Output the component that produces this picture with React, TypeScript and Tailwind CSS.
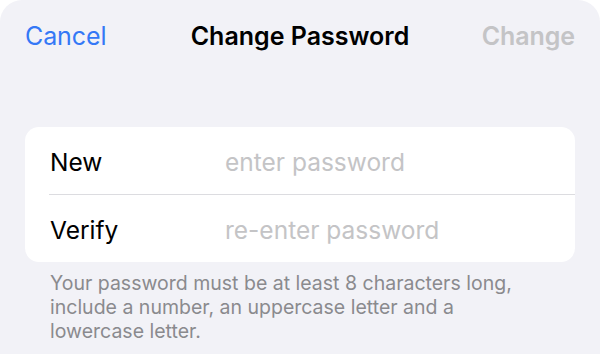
export default function App() {
  return (
    <div className="h-[354px] w-[600px] overflow-hidden bg-white font-['Inter',sans-serif]">
      <div className="h-full rounded-t-[22px] bg-[#f2f2f7]">
        {/* nav bar */}
        <div className="grid h-[74px] grid-cols-[1fr_auto_1fr] items-center px-[25px] pb-[1px]">
          <span className="text-[25px] tracking-[-0.1px] text-[#3478f6]">Cancel</span>
          <span className="text-[25px] font-semibold tracking-[0px] text-black">Change Password</span>
          <span className="text-right text-[25px] font-semibold tracking-[-0.1px] text-[#c4c4c6]">Change</span>
        </div>

        <div className="mx-[25px] mt-[53px] rounded-[14px] bg-white">
          <div className="flex h-[67px] items-center pl-[25px] pt-[3px]">
            <span className="w-[175px] text-[24.5px] text-black">New</span>
            <span className="text-[24.5px] text-[#c4c4c6]">enter password</span>
          </div>
          <div className="ml-[24px] h-px bg-[#dcdce0]" />
          <div className="flex h-[67px] items-center pl-[25px] pt-[3px]">
            <span className="w-[175px] text-[24.5px] text-black">Verify</span>
            <span className="text-[24.5px] text-[#c4c4c6]">re-enter password</span>
          </div>
        </div>

        <p className="ml-[50px] w-[485px] pt-[9px] text-[19.5px] leading-[24px] text-[#8a8a8e]">
          Your password must be at least 8 characters long, include a number, an uppercase letter and a lowercase letter.
        </p>
      </div>
    </div>
  )
}
